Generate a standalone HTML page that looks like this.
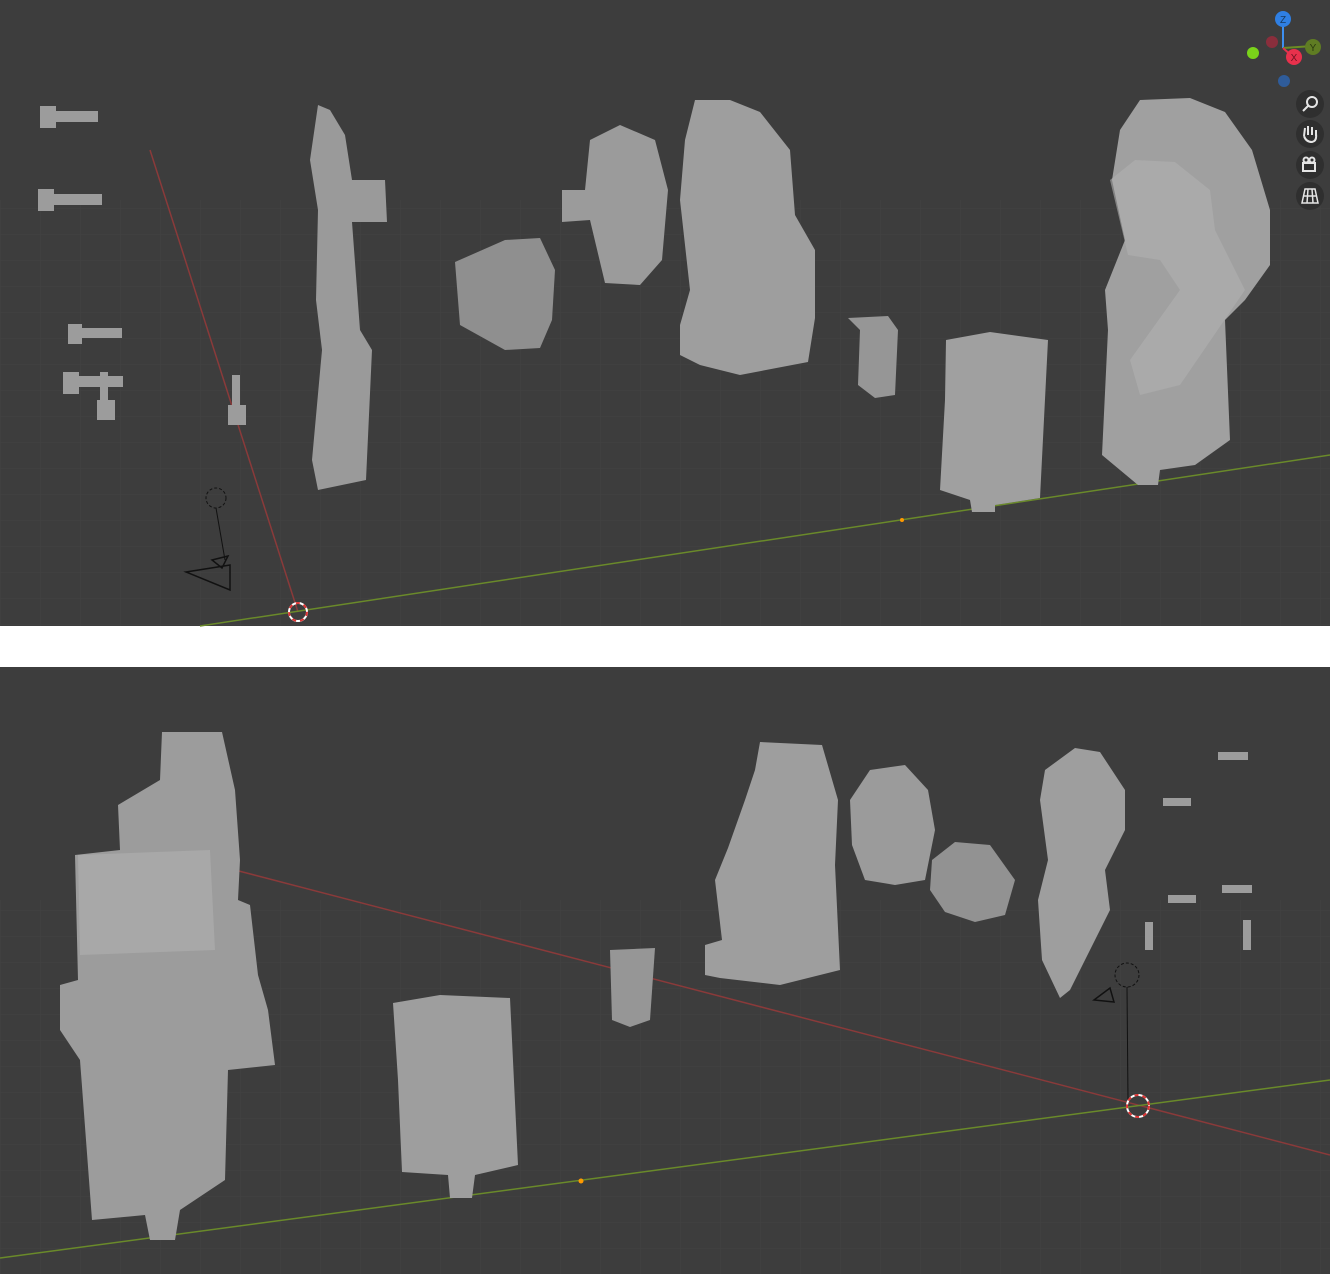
<!DOCTYPE html>
<html><head><meta charset="utf-8"><style>
html,body{margin:0;padding:0;background:#fff;}
svg{display:block;}
</style></head><body>
<svg width="1330" height="1274" viewBox="0 0 1330 1274" xmlns="http://www.w3.org/2000/svg" font-family="Liberation Sans, sans-serif">
<defs>
<pattern id="g" width="40" height="26" patternUnits="userSpaceOnUse">
<path d="M0 0H40M0 0V26" stroke="#464646" stroke-width="1" fill="none"/>
</pattern>
</defs>
<!-- top panel -->
<rect x="0" y="0" width="1330" height="626" fill="#3d3d3d"/>
<rect x="0" y="200" width="1330" height="426" fill="url(#g)" opacity="0.6"/>
<line x1="150" y1="150" x2="298" y2="612" stroke="#8a3a3a" stroke-width="1.5"/>
<line x1="200" y1="626" x2="1330" y2="455" stroke="#6a8a2a" stroke-width="1.5"/>
<!-- screws left -->
<g fill="#9c9c9c">
<rect x="40" y="106" width="16" height="22"/><rect x="56" y="111" width="42" height="11"/>
<rect x="38" y="189" width="16" height="22"/><rect x="54" y="194" width="48" height="11"/>
<rect x="68" y="324" width="14" height="20"/><rect x="82" y="328" width="40" height="10"/>
<rect x="63" y="372" width="16" height="22"/><rect x="79" y="376" width="44" height="11"/>
<rect x="100" y="372" width="8" height="30"/><rect x="97" y="400" width="18" height="20"/>
<rect x="232" y="375" width="8" height="32"/><rect x="228" y="405" width="18" height="20"/>
</g>
<!-- bracket -->
<path d="M318 105 L330 110 L345 135 L352 180 L385 180 L387 222 L352 222 L360 330 L372 350 L366 480 L318 490 L312 460 L322 350 L316 300 L318 210 L310 160 Z" fill="#9a9a9a"/>
<!-- gears -->
<path d="M455 262 L505 240 L540 238 L555 270 L552 320 L540 348 L505 350 L460 325 Z" fill="#8f8f8f"/>
<path d="M562 190 L585 190 L590 140 L620 125 L655 140 L668 190 L662 260 L640 285 L605 283 L590 220 L562 222 Z" fill="#9b9b9b"/>
<!-- housing -->
<path d="M695 100 L730 100 L760 112 L790 150 L795 215 L815 250 L815 318 L808 362 L740 375 L700 365 L680 355 L680 325 L690 290 L680 200 L685 140 Z" fill="#9e9e9e"/>
<path d="M848 318 L888 316 L898 330 L895 395 L875 398 L858 385 L860 330 Z" fill="#969696"/>
<!-- motor -->
<path d="M946 340 L990 332 L1048 340 L1040 498 L995 505 L995 512 L972 512 L970 500 L940 490 L945 400 Z" fill="#a0a0a0"/>
<!-- assembly right -->
<path d="M1140 100 L1190 98 L1225 112 L1252 150 L1270 210 L1270 265 L1245 300 L1225 320 L1230 440 L1195 465 L1160 470 L1158 485 L1138 485 L1102 455 L1108 330 L1105 290 L1125 240 L1112 180 L1120 130 Z" fill="#a0a0a0"/>
<path d="M1110 180 L1135 160 L1175 162 L1210 190 L1215 230 L1245 290 L1180 385 L1140 395 L1130 360 L1180 290 L1160 260 L1128 255 Z" fill="#b0b0b0" opacity="0.6"/>
<!-- camera/empty -->
<circle cx="216" cy="498" r="10" fill="none" stroke="#111" stroke-dasharray="3 2"/>
<line x1="216" y1="508" x2="225" y2="560" stroke="#111"/>
<path d="M186 572 L230 565 L230 590 Z M212 560 L228 556 L222 568 Z" fill="none" stroke="#111" stroke-width="1.5"/>
<circle cx="298" cy="612" r="9" fill="none" stroke="#fff" stroke-width="2"/>
<circle cx="298" cy="612" r="9" fill="none" stroke="#d33" stroke-width="2" stroke-dasharray="4 4"/>
<circle cx="902" cy="520" r="2" fill="#f90"/>
<!-- gizmo -->
<line x1="1283" y1="20" x2="1283" y2="48" stroke="#3d8ff0" stroke-width="2"/>
<line x1="1283" y1="48" x2="1313" y2="46" stroke="#6b8c23" stroke-width="2"/>
<line x1="1283" y1="48" x2="1293" y2="57" stroke="#e0334e" stroke-width="2"/>
<circle cx="1283" cy="19" r="8" fill="#2f7fe3"/><text x="1283" y="23" font-size="10" text-anchor="middle" fill="#16395f">Z</text>
<circle cx="1272" cy="42" r="6" fill="#8a2e3c"/>
<circle cx="1253" cy="53" r="6" fill="#7ad31a"/>
<circle cx="1313" cy="47" r="8" fill="#5f7c23"/><text x="1313" y="51" font-size="10" text-anchor="middle" fill="#2a3a10">Y</text>
<circle cx="1294" cy="57" r="8" fill="#e8314c"/><text x="1294" y="61" font-size="10" text-anchor="middle" fill="#6e1220">X</text>
<circle cx="1284" cy="81" r="6" fill="#2f5c9a"/>
<g fill="#2f2f2f"><circle cx="1310" cy="104" r="14"/><circle cx="1310" cy="134" r="14"/><circle cx="1310" cy="165" r="14"/><circle cx="1310" cy="196" r="14"/></g>
<g stroke="#e5e5e5" stroke-width="2" fill="none">
<circle cx="1312" cy="102" r="5"/><line x1="1308" y1="106" x2="1303" y2="111"/>
<path d="M1304 136 L1305 128 M1308 135 L1308 126 M1312 135 L1312 127 M1316 136 L1316 130 M1304 136 Q1306 142 1312 142 Q1317 141 1316 134"/>
<rect x="1303" y="163" width="12" height="8"/><circle cx="1306" cy="160" r="2.5"/><circle cx="1312" cy="160" r="2.5"/>
<path d="M1302 203 L1305 189 L1315 189 L1318 203 Z M1303 196 H1317 M1308 189 L1307 203 M1312 189 L1313 203" stroke-width="1.5"/>
</g>
<!-- bottom panel -->
<rect x="0" y="667" width="1330" height="607" fill="#3d3d3d"/>
<rect x="0" y="900" width="1330" height="374" fill="url(#g)" opacity="0.6"/>
<line x1="235" y1="870" x2="1330" y2="1155" stroke="#8a3a3a" stroke-width="1.5"/>
<line x1="0" y1="1258" x2="1330" y2="1080" stroke="#6a8a2a" stroke-width="1.5"/>
<!-- big assembly left -->
<path d="M162 732 L222 732 L235 790 L240 860 L238 900 L250 905 L258 975 L268 1010 L275 1065 L228 1070 L225 1180 L180 1210 L175 1240 L150 1240 L145 1215 L92 1220 L80 1060 L60 1030 L60 985 L78 980 L75 855 L120 850 L118 805 L160 780 Z" fill="#9c9c9c"/>
<path d="M78 855 L210 850 L215 950 L80 955 Z" fill="#a8a8a8"/>
<!-- motor bottom -->
<path d="M393 1003 L440 995 L510 998 L518 1165 L475 1175 L472 1198 L450 1198 L448 1175 L402 1172 L398 1080 Z" fill="#9e9e9e"/>
<path d="M610 950 L655 948 L650 1020 L630 1027 L612 1020 Z" fill="#969696"/>
<!-- housing -->
<path d="M760 742 L822 745 L838 800 L835 865 L840 970 L780 985 L720 978 L705 975 L705 945 L722 940 L715 880 L728 848 L745 800 L755 770 Z" fill="#9e9e9e"/>
<path d="M850 800 L870 770 L905 765 L928 790 L935 830 L925 880 L895 885 L865 880 L852 845 Z" fill="#9b9b9b"/>
<path d="M932 860 L955 842 L990 845 L1015 880 L1005 915 L975 922 L945 912 L930 890 Z" fill="#929292"/>
<path d="M1045 770 L1075 748 L1100 752 L1125 790 L1125 830 L1105 870 L1110 910 L1085 960 L1070 990 L1060 998 L1042 960 L1038 900 L1048 860 L1040 800 Z" fill="#9e9e9e"/>
<g fill="#9c9c9c">
<rect x="1218" y="752" width="30" height="8"/><rect x="1163" y="798" width="28" height="8"/>
<rect x="1168" y="895" width="28" height="8"/><rect x="1222" y="885" width="30" height="8"/>
<rect x="1145" y="922" width="8" height="28"/><rect x="1243" y="920" width="8" height="30"/>
</g>
<circle cx="1127" cy="975" r="12" fill="none" stroke="#111" stroke-dasharray="3 2"/>
<line x1="1127" y1="987" x2="1128" y2="1100" stroke="#111"/>
<path d="M1094 1000 L1110 988 L1114 1002 Z" fill="none" stroke="#111" stroke-width="1.5"/>
<circle cx="1138" cy="1106" r="11" fill="none" stroke="#fff" stroke-width="2"/>
<circle cx="1138" cy="1106" r="11" fill="none" stroke="#d33" stroke-width="2" stroke-dasharray="4 4"/>
<circle cx="581" cy="1181" r="2.5" fill="#f90"/>
</svg>
</body></html>
